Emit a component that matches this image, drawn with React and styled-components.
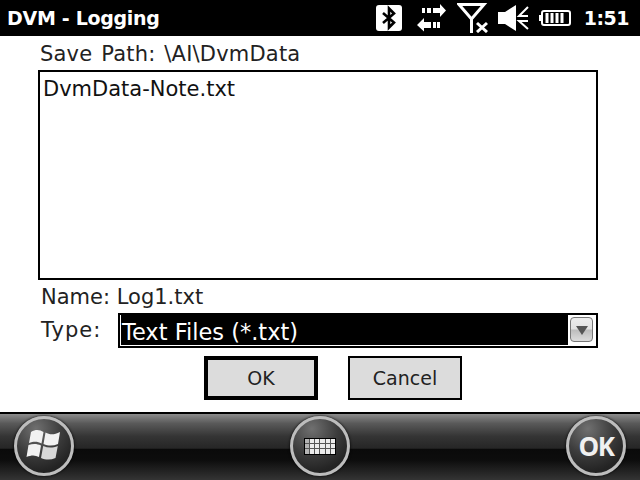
import styled, { createGlobalStyle } from "styled-components";

const Global = createGlobalStyle`
  html, body {
    margin: 0;
    padding: 0;
    background: #fff;
  }
  body {
    font-family: "DejaVu Sans", "Liberation Sans", sans-serif;
  }
`;

const Screen = styled.div`
  width: 640px;
  height: 480px;
  display: flex;
  flex-direction: column;
  overflow: hidden;
  background: #fff;
`;

const TitleBar = styled.header`
  height: 36px;
  flex: none;
  background: #000;
  color: #fff;
  display: flex;
  align-items: center;
  padding: 0 11px 0 7px;
`;

const AppTitle = styled.h1`
  margin: 0;
  flex: 1;
  font-size: 19px;
  font-weight: 700;
  letter-spacing: -0.3px;
  font-family: "DejaVu Sans", sans-serif;
`;

const StatusIcons = styled.div`
  display: flex;
  align-items: center;
`;

const Clock = styled.span`
  font-size: 19px;
  font-weight: 700;
  margin-left: 13px;
  letter-spacing: -0.5px;
`;

const Body = styled.main`
  flex: 1;
  display: flex;
  flex-direction: column;
  padding: 0 42px 0 38px;
  color: #222;
  font-size: 21px;
`;

const PathLabel = styled.div`
  height: 34px;
  padding-left: 2px;
  line-height: 36px;
  word-spacing: 2px;
  letter-spacing: 0.2px;
  white-space: nowrap;
`;

const FileList = styled.div`
  height: 210px;
  box-sizing: border-box;
  border: 2px solid #000;
  padding: 2px 3px;
  line-height: 31px;
  color: #111;
`;

const NameRow = styled.div`
  height: 33px;
  padding-left: 3px;
  line-height: 35px;
`;

const TypeRow = styled.div`
  display: flex;
  height: 35px;
`;

const TypeLabel = styled.div`
  width: 80px;
  padding-left: 3px;
  box-sizing: border-box;
  line-height: 34px;
  letter-spacing: 1px;
`;

const Select = styled.div`
  flex: 1;
  display: flex;
  box-sizing: border-box;
  border: 2px solid #000;
  background: #fff;
  padding: 0 0 1px 1px;
`;

const SelectValue = styled.div`
  flex: 1;
  background: #000;
  color: #fff;
  font-size: 22.5px;
  line-height: 34px;
  padding-left: 1px;
  white-space: nowrap;
`;

const ArrowCell = styled.div`
  width: 28px;
  flex: none;
  box-sizing: border-box;
  padding: 2px 3px 3px 2px;
  display: flex;
`;

const SelectArrow = styled.div`
  flex: 1;
  box-sizing: border-box;
  border: 1px solid #777;
  border-radius: 4px;
  background: linear-gradient(#ededed 0%, #e2e2e2 48%, #bcbcbc 52%, #dcdcdc 100%);
  display: flex;
  justify-content: center;
  padding-top: 8px;
  &::after {
    content: "";
    width: 0;
    height: 0;
    border-left: 6px solid transparent;
    border-right: 6px solid transparent;
    border-top: 9px solid #555;
  }
`;

const Buttons = styled.div`
  display: flex;
  gap: 30px;
  margin-top: 8px;
  padding-left: 166px;
`;

const Button = styled.button`
  width: 114px;
  height: 44px;
  box-sizing: border-box;
  border: ${(p) => (p.$default ? "4px" : "2px")} solid #000;
  background: #dcdcdc;
  color: #222;
  font-family: inherit;
  font-size: 19px;
  padding: 0;
`;

const Footer = styled.footer`
  height: 68px;
  flex: none;
  box-sizing: border-box;
  border-top: 2px solid #000;
  background: linear-gradient(
    #8c8c8c 0%,
    #5a5a5a 14%,
    #343434 34%,
    #262626 52%,
    #0a0a0a 53%,
    #0d0d0d 70%,
    #343434 100%
  );
  display: flex;
  align-items: flex-start;
  justify-content: space-between;
  padding: 2px 14px 0 14px;
`;

const SoftKey = styled.div`
  width: 60px;
  height: 60px;
  box-sizing: border-box;
  border-radius: 50%;
  border: 3px solid #bdbdbd;
  box-shadow: 0 0 3px #000;
  background: radial-gradient(circle at 35% 18%, #707070 0%, #3c3c3c 45%, #242424 75%, #1c1c1c 100%);
  display: flex;
  align-items: center;
  justify-content: center;
  color: #f0f0f0;
  font-size: 26px;
  font-weight: 700;
  letter-spacing: -1.5px;
  font-family: "Open Sans", sans-serif;
`;

const Keyboard = styled.div`
  width: 32px;
  height: 17px;
  box-sizing: border-box;
  border: 1px solid #000;
  background: #555;
  display: grid;
  grid-template-columns: repeat(6, 1fr);
  gap: 1px;
`;

const Key = styled.span`
  background: ${(p) => (p.$dim ? "#b4b4b4" : "#ececec")};
`;

const BluetoothIcon = () => (
  <svg width="26" height="26" viewBox="0 0 26 26">
    <rect width="26" height="26" rx="3" fill="#fff" />
    <path
      d="M7 8 L18 17.5 L13 22.5 L13 3.5 L18 8.5 L7 18"
      fill="none"
      stroke="#000"
      strokeWidth="2.6"
    />
  </svg>
);

const SyncIcon = () => (
  <svg width="29" height="28" viewBox="0 0 29 28" style={{ marginLeft: 15 }}>
    <g fill="#fff">
      <path d="M16 4h7V0l6 6.5L23 13V9h-7z" />
      <rect x="10" y="4" width="4" height="5" />
      <rect x="5" y="4" width="3" height="5" />
      <path d="M14 18H7v-4l-7 7 7 6.5V24h7z" />
      <rect x="16" y="18" width="3" height="6" />
      <rect x="20" y="18" width="3" height="6" />
    </g>
  </svg>
);

const SignalIcon = () => (
  <svg width="32" height="30" viewBox="0 0 32 30" style={{ marginLeft: 11 }}>
    <path d="M2 1.5 H27 L14.5 16 Z" fill="none" stroke="#fff" strokeWidth="3" />
    <rect x="13" y="15" width="3" height="15" fill="#fff" />
    <path d="M20 20 L30 29 M30 20 L20 29" stroke="#fff" strokeWidth="3" />
  </svg>
);

const VolumeIcon = () => (
  <svg width="32" height="26" viewBox="0 0 32 26" style={{ marginLeft: 9 }}>
    <path d="M0 7 H7 L18 0 V26 L7 19 H0 Z" fill="#fff" />
    <path d="M30 2 L21 11 H30 M30 24 L21 16 H30" fill="none" stroke="#fff" strokeWidth="2" />
  </svg>
);

const BatteryIcon = () => (
  <svg width="32" height="16" viewBox="0 0 32 16" style={{ marginLeft: 9 }}>
    <rect x="0" y="5" width="3" height="6" fill="#fff" />
    <rect x="3" y="1" width="28" height="14" rx="2" fill="none" stroke="#fff" strokeWidth="2" />
    <path d="M8 3v10M13 3v10M18 3v10M23 3v10" stroke="#fff" strokeWidth="3" />
  </svg>
);

const WindowsLogo = () => (
  <svg width="38" height="38" viewBox="0 0 38 38">
    <g fill="#f2f2f2">
      <path d="M6 5 C11 2 15 3 18.5 5 L16.5 16.5 C13 14.5 9 14 4 16 Z" />
      <path d="M20.5 5.5 C25 8 29 8 35 5 L33 17 C28 19 23.5 19 18.5 17 Z" />
      <path d="M3.5 18 C8 16.5 12 16.5 16 18.5 L14 30 C10 28 6.5 28 1.5 30 Z" />
      <path d="M18.2 19 C23 21 27.5 21 32.8 19 L30.5 31 C25.5 33 21 33 16 31 Z" fill="#d8d8d8" />
    </g>
  </svg>
);

const keys = Array.from({ length: 18 }, (_, i) => i);

export default function App() {
  return (
    <Screen>
      <Global />
      <TitleBar>
        <AppTitle>DVM - Logging</AppTitle>
        <StatusIcons>
          <BluetoothIcon />
          <SyncIcon />
          <SignalIcon />
          <VolumeIcon />
          <BatteryIcon />
          <Clock>1:51</Clock>
        </StatusIcons>
      </TitleBar>
      <Body>
        <PathLabel>Save Path: \AI\DvmData</PathLabel>
        <FileList>DvmData-Note.txt</FileList>
        <NameRow>Name: Log1.txt</NameRow>
        <TypeRow>
          <TypeLabel>Type:</TypeLabel>
          <Select>
            <SelectValue>Text Files (*.txt)</SelectValue>
            <ArrowCell>
              <SelectArrow />
            </ArrowCell>
          </Select>
        </TypeRow>
        <Buttons>
          <Button $default>OK</Button>
          <Button>Cancel</Button>
        </Buttons>
      </Body>
      <Footer>
        <SoftKey>
          <WindowsLogo />
        </SoftKey>
        <SoftKey>
          <Keyboard>
            {keys.map((k) => (
              <Key key={k} $dim={k % 6 === 0} />
            ))}
          </Keyboard>
        </SoftKey>
        <SoftKey>OK</SoftKey>
      </Footer>
    </Screen>
  );
}
